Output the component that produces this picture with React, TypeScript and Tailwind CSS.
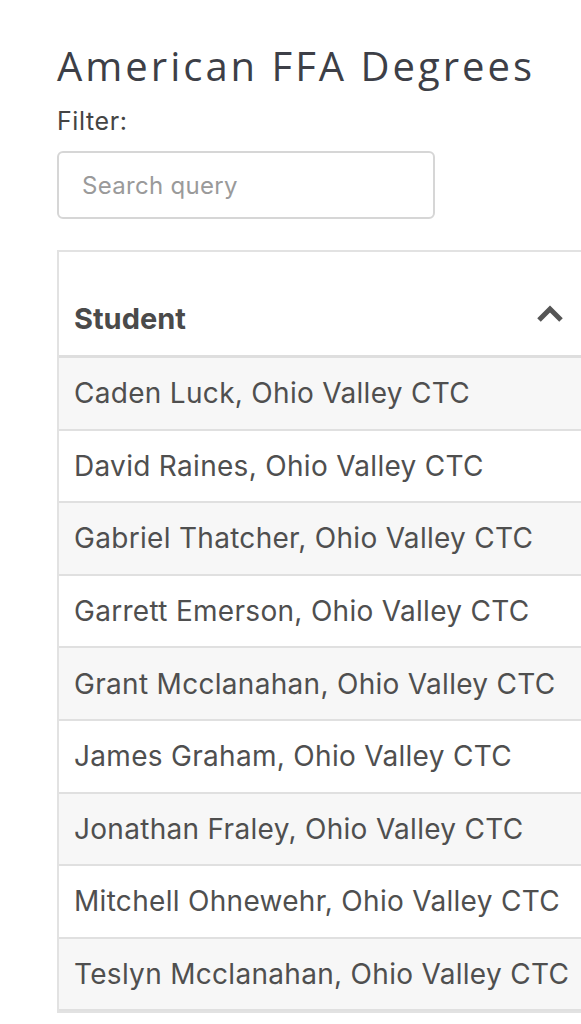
import React from "react";

const students = [
  "Caden Luck, Ohio Valley CTC",
  "David Raines, Ohio Valley CTC",
  "Gabriel Thatcher, Ohio Valley CTC",
  "Garrett Emerson, Ohio Valley CTC",
  "Grant Mcclanahan, Ohio Valley CTC",
  "James Graham, Ohio Valley CTC",
  "Jonathan Fraley, Ohio Valley CTC",
  "Mitchell Ohnewehr, Ohio Valley CTC",
  "Teslyn Mcclanahan, Ohio Valley CTC",
];

export default function App(): React.ReactElement {
  return (
    <div className="min-h-screen w-[581px] overflow-hidden bg-white font-['Inter','Liberation_Sans',sans-serif]">
      <div className="pl-[57px] pt-[38px]">
        {/* Title */}
        <h1 className="font-['Open_Sans',sans-serif] text-[40px] leading-[56px] font-normal tracking-[3px] text-[#3d3f47]">
          American FFA Degrees
        </h1>
        <label className="mt-[12px] block text-[25px] leading-[30px] tracking-[0.6px] text-[#444]">
          Filter:
        </label>
        <input
          type="text"
          placeholder="Search query"
          className="mt-[15px] block h-[68px] w-[378px] rounded-[6px] border-2 border-[#d6d6d6] px-[23px] text-[24px] tracking-[0.3px] text-[#555] placeholder:text-[#9a9a9a] outline-none"
        />

        {/* Table */}
        <div className="mt-[31px] w-[560px] border-2 border-[#e2e2e2]">
          <div className="flex h-[106px] items-end justify-between border-b-[3px] border-[#dedede] pb-[15px] pl-[15px] pr-[51px]">
            <span className="text-[29px] font-bold text-[#4a4a4a]">Student</span>
            <svg width="28" height="18" viewBox="0 0 28 18" className="mb-[17px]">
              <path
                d="M3 15 L14 4 L25 15"
                fill="none"
                stroke="#555"
                strokeWidth="5"
              />
            </svg>
          </div>
          {students.map((name, i) => (
            <div
              key={name}
              className={`flex h-[72.6px] items-center border-b-2 border-[#e0e0e0] pl-[15px] text-[28px] tracking-[0.3px] text-[#4f4f4f] ${
                i % 2 === 0 ? "bg-[#f7f7f7]" : "bg-white"
              }`}
            >
              {name}
            </div>
          ))}
        </div>
      </div>
    </div>
  );
}
